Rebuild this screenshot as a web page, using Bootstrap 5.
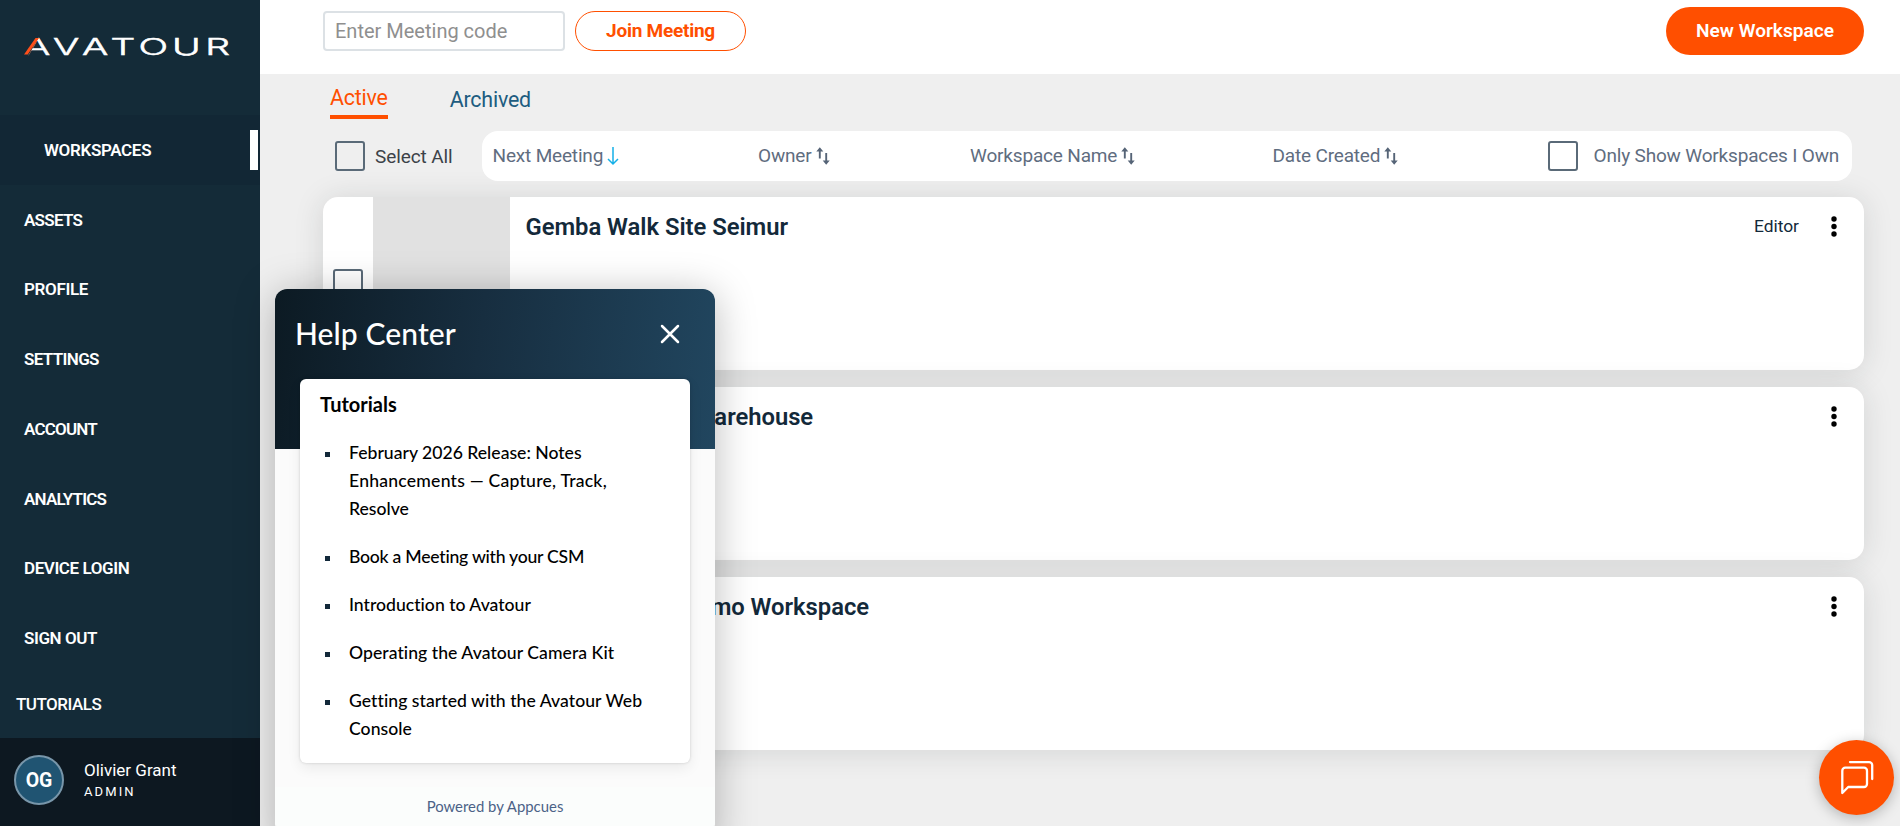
<!DOCTYPE html>
<html lang="en">
<head>
<meta charset="utf-8">
<meta name="viewport" content="width=device-width, initial-scale=1">
<title>Avatour Workspaces</title>
<link href="https://cdn.jsdelivr.net/npm/bootstrap@5.3.0/dist/css/bootstrap.min.css" rel="stylesheet">
<style>
body{font-family:Roboto,sans-serif;background:#efefef;height:826px;overflow:hidden;color:#13293a}
.side{width:260px;background:#142b38;flex:none}
.brand{height:115px;padding:32px 0 0 24px}
.side .nav-link{height:69.75px;padding:1px 0 0 24px;color:#fff;font-size:17px;font-weight:600;line-height:1;letter-spacing:-.65px;display:flex;align-items:center;position:relative}
.side .nav-link.active{background:#122735;padding-left:44px;letter-spacing:-.33px}
.side .nav-link.active::after{content:"";position:absolute;right:2px;top:15px;width:8px;height:40px;background:#fff}
.side .k2{letter-spacing:-.73px}.side .k3{letter-spacing:-.33px}.side .k5,.side .k6{letter-spacing:-.8px}.side .k7,.side .k8{letter-spacing:-.43px}
.side .nav-link.tut{height:65px;padding:0 0 2px 16px;font-weight:500;letter-spacing:-.5px}
.who{background:#0d1821;color:#fff;padding:0 0 4px 14px;gap:20px;height:88px}
.avatar{width:50px;height:50px;border:2px solid #7896aa;background:#205472;font-weight:700;font-size:19.5px;padding-top:2px}
.who-name{font-size:17px;line-height:22px;margin-top:-1px}
.who-role{font-size:13px;line-height:16px;letter-spacing:2.1px;margin-top:3px}
.topbar{height:74px;background:#fff;padding:7px 36px 0 63px}
.code{width:242px;height:40px;border:2px solid #dce1e5;border-radius:4px;padding:0 10px;font-size:20px;margin-right:10px}
.code::placeholder{color:#8f8f8f;opacity:1}
.btn-join{width:171px;height:40px;border:1.5px solid #ff4f00;border-radius:20px;color:#ff4f00;font-weight:700;font-size:19px;padding:0;letter-spacing:-.25px}
.btn-new{width:198px;height:48px;border-radius:24px;background:#ff4f00;color:#fff;font-weight:600;font-size:19.1px;padding:1px 0 0}
.tabs{height:57px;padding-left:70px;font-size:21.4px;font-weight:400;letter-spacing:-.2px;gap:62px}
.tabs a{text-decoration:none;color:#205c80;line-height:26px;margin-top:12.5px}
.tabs a.on{color:#ff4f00;height:34px;border-bottom:4.5px solid #ff4f00;margin-top:10.5px}
.filters{height:50px;padding-left:75px;font-size:19px;font-weight:400;letter-spacing:-.17px;line-height:30px}
.box{width:30px;height:30px;border:2px solid #5a6a78;border-radius:3px;background:transparent;flex:none;display:inline-block}
.selall{color:#3c4248;width:76px;margin:0 31px 0 10px;padding-top:1px;letter-spacing:-.1px}
.sortbar{width:1370px;height:50px;border-radius:16px;background:#fff;color:#5f6d7f;padding-left:10.5px}
.sortbar svg{flex:none}
.c1{width:265.5px}.c2{width:212px}.c3{width:302.5px}.c4{width:275px}
.ws{width:1541px;height:173px;margin:0 0 17px 63px;border-radius:15px;background:#fff;box-shadow:0 2px 30px rgba(30,40,40,.13);overflow:hidden}
.pick{width:50px;padding-left:10px}
.thumb{width:137px;background:#e1e1e1}
.ws h2{font-size:23.8px;font-weight:600;line-height:30px;margin:15px 0 0 15.5px;letter-spacing:-.03px}
.ws h2.w2{margin-left:44.5px}
.ws h2.w3{margin-left:33px}
.ws .role{font-size:17.4px;line-height:24px;margin:17px 31px 0 0}
.ws .dots{margin:18px 26px 0 0}
.help{position:absolute;left:275px;top:289px;width:440px;height:537px;border-radius:12px 12px 3px 3px;background:#fbfbfb;overflow:hidden;font-family:Lato,sans-serif;color:#000;font-variant-ligatures:none}
.helpshade{position:absolute;left:275px;top:289px;width:440px;height:560px;border-radius:12px;box-shadow:0 5px 40px rgba(0,0,0,.27)}
.help-head{height:160px;background:linear-gradient(97deg,#0c1a23 0%,#172e40 46%,#21465f 100%);padding:23px 34px 0 20px;color:#fff}
.help-head h1{font-size:30px;font-weight:500;line-height:42px;margin:0;letter-spacing:.1px}
.help-head svg{margin-top:10.5px}
.help-card{width:390px;height:384px;margin:-70px auto 0;background:#fff;border-radius:6px;padding:12px 20px;box-shadow:0 0 3px rgba(0,0,0,.16),0 5px 14px rgba(0,0,0,.07);position:relative}
.help-card h3{font-size:20px;font-weight:700;line-height:27px;margin:0 0 21px}
.help-card ul{list-style:none;margin:0;padding:0}
.help-card li{font-size:17.6px;line-height:28px;padding-left:29px;margin-bottom:20px;position:relative;font-weight:500;white-space:nowrap}
.help-card li.csm{letter-spacing:-.24px}
.help-card li.far{letter-spacing:.05px}
.help-card li::before{content:"";position:absolute;left:5px;top:13px;width:5px;height:5px;background:#13293a}
.wide{letter-spacing:.22px}
.help-foot{margin-top:24px;height:39px;background:#fbfdfc;color:#4b6287;font-size:14.9px;line-height:39px}
.fab{position:absolute;left:1819px;top:740px;width:75px;height:75px;border-radius:50%;background:#ff4f00;box-shadow:0 3px 14px rgba(0,0,0,.25)}
</style>
</head>
<body class="d-flex position-relative">
<svg width="0" height="0" class="position-absolute"><defs>
<g id="sort" fill="none" stroke="#566477" stroke-width="1.9"><path d="M3.8 11.5V3"/><path d="M10.2 6v9"/><path d="M3.8 .3 7.3 4.6H.3zM10.2 17.7 6.7 13.4h7z" fill="#566477" stroke="none"/></g>
<g id="kebab"><circle cx="4" cy="4" r="2.7"/><circle cx="4" cy="11.5" r="2.7"/><circle cx="4" cy="19" r="2.7"/></g>
</defs></svg>

<nav class="side d-flex flex-column">
  <div class="brand">
    <svg width="212" height="28" viewBox="0 0 212 28">
      <g transform="translate(0 22.5) scale(1.72 1)"><text font-family="Inter, sans-serif" font-weight="300" font-size="22.7" fill="#fff" stroke="#fff" stroke-width=".5" x="0 16.9 33.7 50.3 66.6 86 105.4">AVATOUR</text></g>
      <path d="M-1 0H17L12.500 9.500 4 24H-1z" fill="#142b38"/>
      <path d="M0 22.500 11.500 6H15L3.700 22.500z" fill="#ff4f1a"/>
    </svg>
  </div>
  <div class="nav flex-column flex-nowrap">
    <a class="nav-link active" href="#">WORKSPACES</a>
    <a class="nav-link k2" href="#">ASSETS</a>
    <a class="nav-link k3" href="#">PROFILE</a>
    <a class="nav-link" href="#">SETTINGS</a>
    <a class="nav-link k5" href="#">ACCOUNT</a>
    <a class="nav-link k6" href="#">ANALYTICS</a>
    <a class="nav-link k7" href="#">DEVICE LOGIN</a>
    <a class="nav-link k8" href="#">SIGN OUT</a>
    <a class="nav-link tut" href="#">TUTORIALS</a>
  </div>
  <div class="who d-flex align-items-center mt-auto">
    <div class="avatar rounded-circle d-flex align-items-center justify-content-center">OG</div>
    <div><div class="who-name">Olivier Grant</div><div class="who-role">ADMIN</div></div>
  </div>
</nav>

<main class="flex-grow-1">
  <header class="topbar d-flex align-items-start">
    <div class="d-flex align-items-center mt-1">
      <input class="form-control code" placeholder="Enter Meeting code">
      <button class="btn btn-join">Join Meeting</button>
    </div>
    <button class="btn btn-new ms-auto">New Workspace</button>
  </header>
  <div class="tabs d-flex align-items-start">
    <a class="on" href="#">Active</a>
    <a href="#">Archived</a>
  </div>
  <div class="filters d-flex align-items-center">
    <span class="box"></span><span class="selall text-nowrap">Select All</span>
    <div class="sortbar d-flex align-items-center text-nowrap">
      <div class="c1 d-flex align-items-center">Next Meeting
        <svg class="ms-1" width="12" height="20" viewBox="0 0 12 20" fill="none" stroke="#14b0e8" stroke-width="1.5"><path d="M6 1v17M1 13l5 5 5-5"/></svg></div>
      <div class="c2 d-flex align-items-center">Owner<svg class="ms-1" width="14" height="18"><use href="#sort"/></svg></div>
      <div class="c3 d-flex align-items-center">Workspace Name<svg class="ms-1" width="14" height="18"><use href="#sort"/></svg></div>
      <div class="c4 d-flex align-items-center">Date Created<svg class="ms-1" width="14" height="18"><use href="#sort"/></svg></div>
      <span class="box"></span><span class="ms-3">Only Show Workspaces I Own</span>
    </div>
  </div>
  <div class="pt-3">
    <article class="ws d-flex">
      <div class="pick d-flex align-items-center"><span class="box"></span></div>
      <div class="thumb"></div>
      <h2 class="flex-grow-1">Gemba Walk Site Seimur</h2>
      <span class="role">Editor</span>
      <svg class="dots" width="8" height="23"><use href="#kebab"/></svg>
    </article>
    <article class="ws d-flex">
      <div class="pick d-flex align-items-center"><span class="box"></span></div>
      <div class="thumb"></div>
      <h2 class="w2 flex-grow-1">Gemba Walk Warehouse</h2>
      <svg class="dots" width="8" height="23"><use href="#kebab"/></svg>
    </article>
    <article class="ws d-flex">
      <div class="pick d-flex align-items-center"><span class="box"></span></div>
      <div class="thumb"></div>
      <h2 class="w3 flex-grow-1">Gemba Walk Demo Workspace</h2>
      <svg class="dots" width="8" height="23"><use href="#kebab"/></svg>
    </article>
  </div>
</main>

<div class="helpshade"></div>
<aside class="help">
  <div class="help-head d-flex justify-content-between align-items-start">
    <h1>Help Center</h1>
    <svg width="22" height="22" viewBox="0 0 22 22" stroke="#fff" stroke-width="2.5" stroke-linecap="round"><path d="M3 3l16 16M19 3 3 19"/></svg>
  </div>
  <div class="help-card">
    <h3>Tutorials</h3>
    <ul>
      <li>February 2026 Release: Notes<br><span class="wide">Enhancements — Capture, Track,</span><br>Resolve</li>
      <li class="csm">Book a Meeting with your CSM</li>
      <li>Introduction to Avatour</li>
      <li class="far">Operating the Avatour Camera Kit</li>
      <li class="far">Getting started with the Avatour Web<br>Console</li>
    </ul>
  </div>
  <div class="help-foot text-center">Powered by Appcues</div>
</aside>

<button class="fab border-0 p-0 d-flex align-items-center justify-content-center">
  <svg width="38" height="38" viewBox="0 0 38 38" fill="none" stroke="#fff" stroke-width="2.3" stroke-linejoin="round" stroke-linecap="round"><path d="M7.3 8.7H26a3 3 0 0 1 3 3V25a3 3 0 0 1-3 3H10.200L4.300 34V11.700a3 3 0 0 1 3-3z"/><path d="M12 3.100h19.200a3 3 0 0 1 3 3V20"/></svg>
</button>
<script src="https://cdn.jsdelivr.net/npm/bootstrap@5.3.0/dist/js/bootstrap.bundle.min.js"></script>
</body>
</html>
